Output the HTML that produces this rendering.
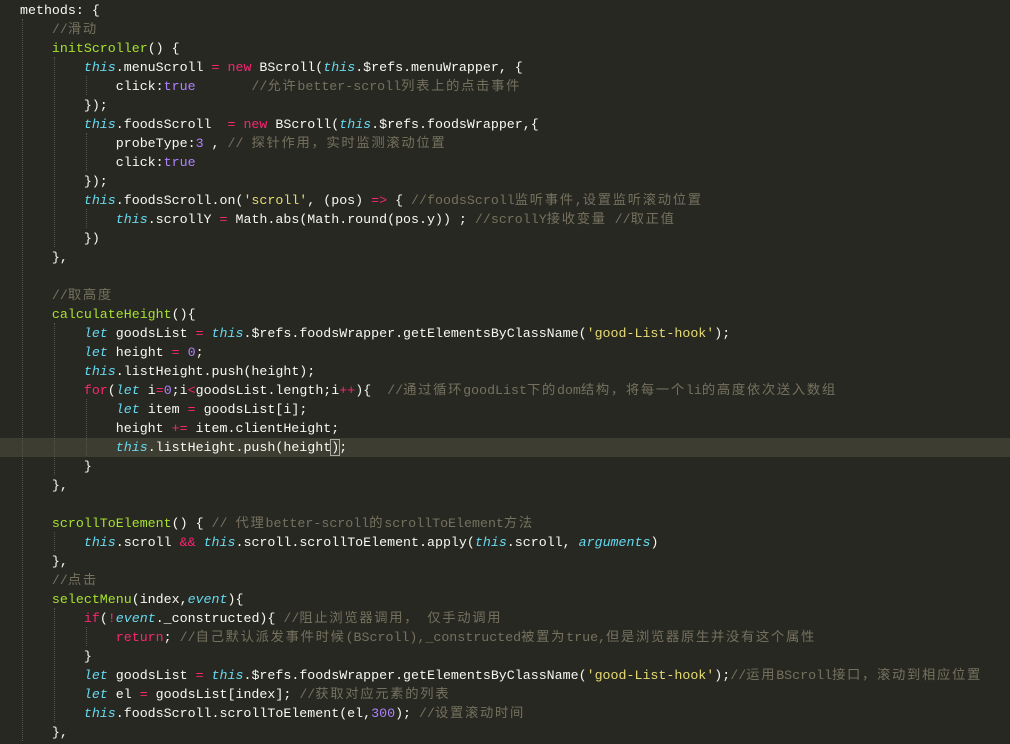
<!DOCTYPE html>
<html><head><meta charset="utf-8"><style>
html,body{margin:0;padding:0;background:#272822;width:1010px;height:744px;overflow:hidden}
#code{position:absolute;left:20px;top:1px;margin:0;font-family:"Liberation Mono","Noto Sans CJK SC",monospace;font-size:13.3px;line-height:19px;color:#f8f8f2;white-space:pre}
.k{color:#f92672}.t{color:#66d9ef;font-style:italic}.f{color:#a6e22e}.n{color:#ae81ff}.s{color:#e6db74}.c{color:#75715e}
.z{letter-spacing:1.7px}
.hl{position:absolute;left:0;top:438px;width:1010px;height:19px;background:#3e3d32}
.g{position:absolute;width:0;border-left:1px dotted #55554a}
.cur{border:1px solid #aaa;margin:0 -1px}
</style></head><body>
<div class="hl"></div>
<div class="g" style="left:22px;top:19px;height:722px"></div>
<div class="g" style="left:54px;top:57px;height:190px"></div>
<div class="g" style="left:54px;top:323px;height:152px"></div>
<div class="g" style="left:54px;top:532px;height:19px"></div>
<div class="g" style="left:54px;top:608px;height:114px"></div>
<div class="g" style="left:86px;top:76px;height:19px"></div>
<div class="g" style="left:86px;top:133px;height:38px"></div>
<div class="g" style="left:86px;top:209px;height:19px"></div>
<div class="g" style="left:86px;top:399px;height:57px"></div>
<div class="g" style="left:86px;top:627px;height:19px"></div>
<pre id="code">methods: {
    <span class="c">//滑动</span>
    <span class="f">initScroller</span>() {
        <span class="t">this</span>.menuScroll <span class="k">=</span> <span class="k">new</span> BScroll(<span class="t">this</span>.$refs.menuWrapper, {
            click:<span class="n">true</span>       <span class="c">//允许better-scroll列表上的点击事件</span>
        });
        <span class="t">this</span>.foodsScroll  <span class="k">=</span> <span class="k">new</span> BScroll(<span class="t">this</span>.$refs.foodsWrapper,{
            probeType:<span class="n">3</span> , <span class="c">// 探针作用，实时监测滚动位置</span>
            click:<span class="n">true</span>
        });
        <span class="t">this</span>.foodsScroll.on(<span class="s">'scroll'</span>, (pos) <span class="k">=&gt;</span> { <span class="c">//foodsScroll监听事件,设置监听滚动位置</span>
            <span class="t">this</span>.scrollY <span class="k">=</span> Math.abs(Math.round(pos.y)) ; <span class="c">//scrollY接收变量 //取正值</span>
        })
    },

    <span class="c">//取高度</span>
    <span class="f">calculateHeight</span>(){
        <span class="t">let</span> goodsList <span class="k">=</span> <span class="t">this</span>.$refs.foodsWrapper.getElementsByClassName(<span class="s">'good-List-hook'</span>);
        <span class="t">let</span> height <span class="k">=</span> <span class="n">0</span>;
        <span class="t">this</span>.listHeight.push(height);
        <span class="k">for</span>(<span class="t">let</span> i<span class="k">=</span><span class="n">0</span>;i<span class="k">&lt;</span>goodsList.length;i<span class="k">++</span>){  <span class="c">//通过循环goodList下的dom结构，将每一个li的高度依次送入数组</span>
            <span class="t">let</span> item <span class="k">=</span> goodsList[i];
            height <span class="k">+=</span> item.clientHeight;
            <span class="t">this</span>.listHeight.push(height<span class="cur">)</span>;
        }
    },

    <span class="f">scrollToElement</span>() { <span class="c">// 代理better-scroll的scrollToElement方法</span>
        <span class="t">this</span>.scroll <span class="k">&amp;&amp;</span> <span class="t">this</span>.scroll.scrollToElement.apply(<span class="t">this</span>.scroll, <span class="t">arguments</span>)
    },
    <span class="c">//点击</span>
    <span class="f">selectMenu</span>(index,<span class="t">event</span>){
        <span class="k">if</span>(<span class="k">!</span><span class="t">event</span>._constructed){ <span class="c">//阻止浏览器调用， 仅手动调用</span>
            <span class="k">return</span>; <span class="c">//自己默认派发事件时候(BScroll),_constructed被置为true,但是浏览器原生并没有这个属性</span>
        }
        <span class="t">let</span> goodsList <span class="k">=</span> <span class="t">this</span>.$refs.foodsWrapper.getElementsByClassName(<span class="s">'good-List-hook'</span>);<span class="c">//运用BScroll接口，滚动到相应位置</span>
        <span class="t">let</span> el <span class="k">=</span> goodsList[index]; <span class="c">//获取对应元素的列表</span>
        <span class="t">this</span>.foodsScroll.scrollToElement(el,<span class="n">300</span>); <span class="c">//设置滚动时间</span>
    },
</pre>
<script>
(function(){
  var root=document.getElementById('code');
  var w=document.createTreeWalker(root,NodeFilter.SHOW_TEXT,null,false),nodes=[],n;
  while(n=w.nextNode())nodes.push(n);
  var re=/[\u3000-\u9fff\uff00-\uffef]+/g;
  nodes.forEach(function(t){
    var s=t.nodeValue; if(!re.test(s))return; re.lastIndex=0;
    var f=document.createDocumentFragment(),last=0,m;
    while((m=re.exec(s))){
      if(m.index>last)f.appendChild(document.createTextNode(s.slice(last,m.index)));
      var sp=document.createElement('span');sp.className='z';sp.textContent=m[0];f.appendChild(sp);
      last=m.index+m[0].length;
    }
    if(last<s.length)f.appendChild(document.createTextNode(s.slice(last)));
    t.parentNode.replaceChild(f,t);
  });
})();
</script>
</body></html>
